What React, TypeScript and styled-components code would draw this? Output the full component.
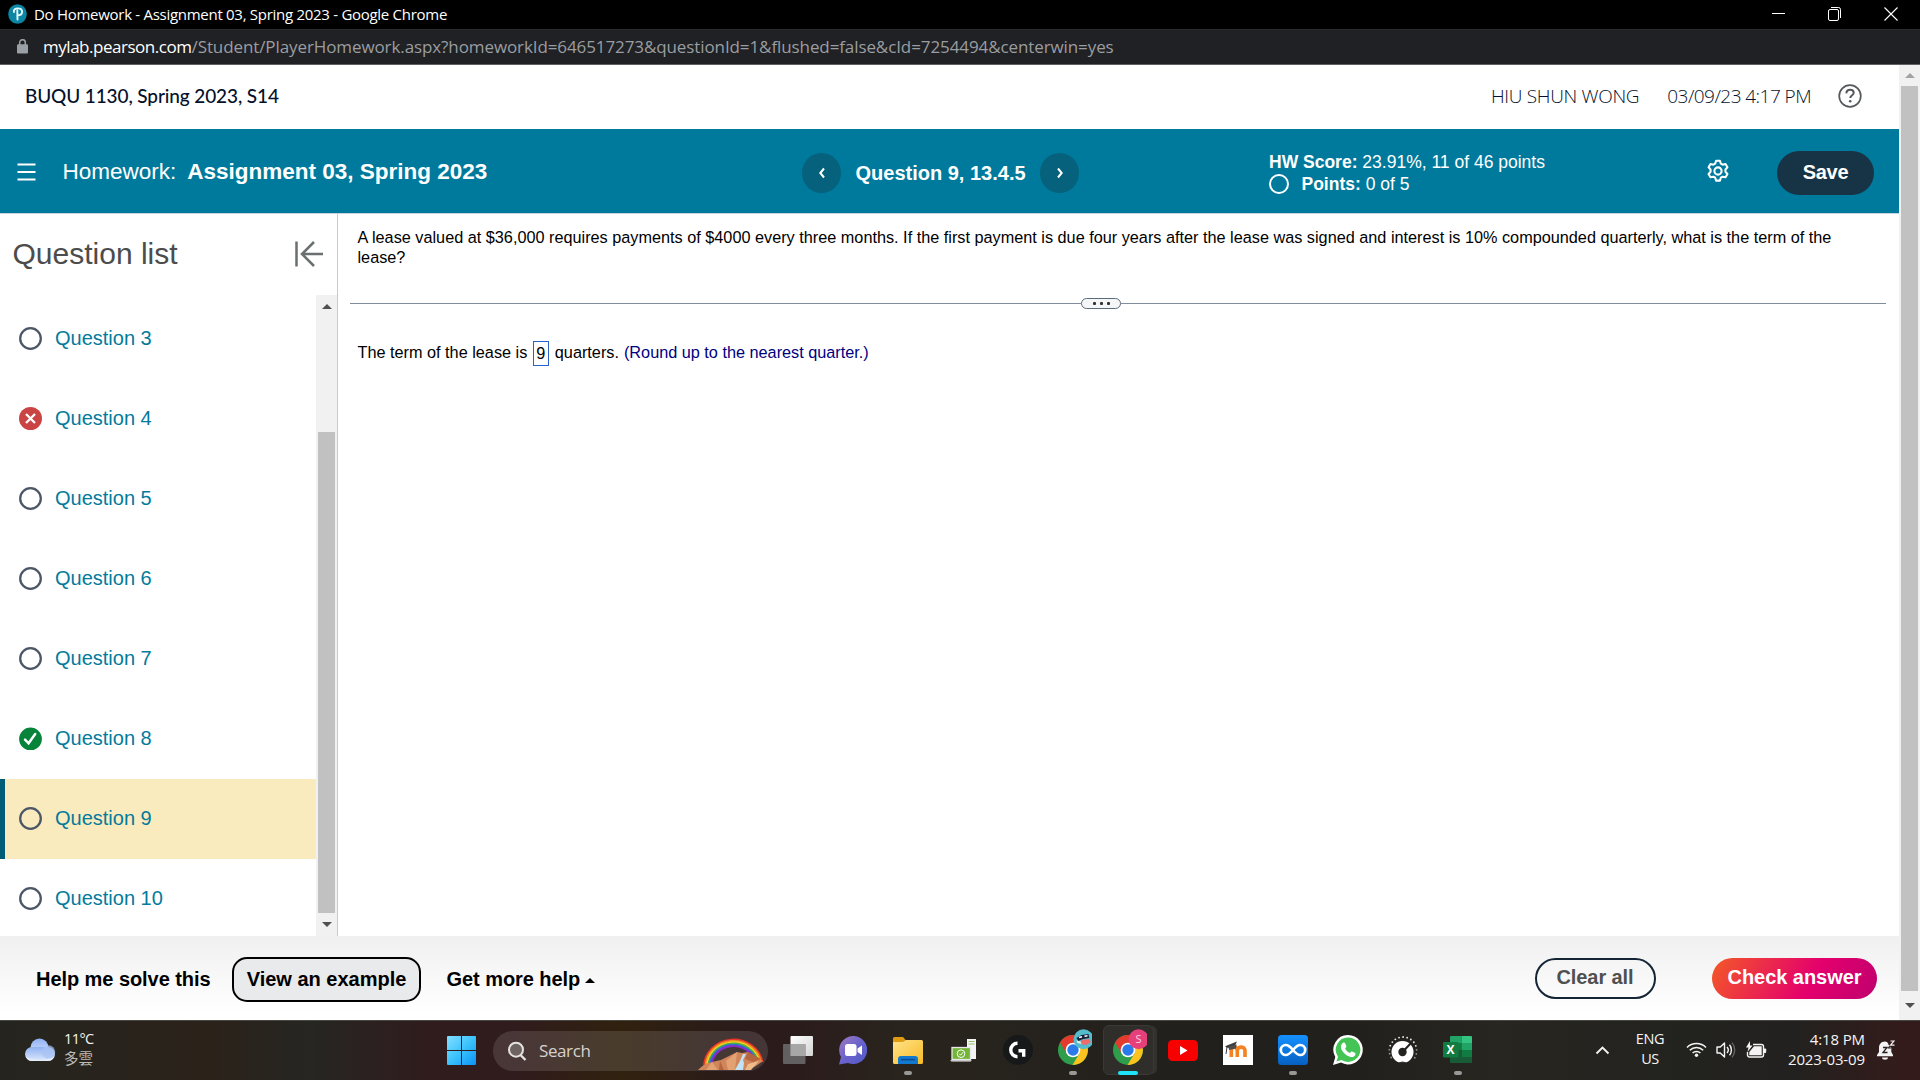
import React from "react";
import styled, { createGlobalStyle } from "styled-components";

const arial = '"Liberation Sans", Arial, sans-serif';
const system = '"Open Sans", "Noto Sans CJK TC", sans-serif';

const GlobalStyle = createGlobalStyle`
  * { box-sizing: border-box; }
  html, body { margin: 0; padding: 0; background: #fff; }
  body { font-family: ${arial}; overflow: hidden; }
  svg { display: block; flex: none; }
`;

const Screen = styled.div`
  width: 1920px;
  height: 1080px;
  display: flex;
  flex-direction: column;
  overflow: hidden;
`;

/* Browser window */

const TitleBar = styled.div`
  height: 29px;
  flex: none;
  background: #000;
  color: #fff;
  font: 15px/26px ${system};
  letter-spacing: -0.283px;
  display: flex;
  align-items: center;
  padding: 0 22px 1px 8px;
  gap: 7px;
`;

const WindowTitle = styled.span`
  flex: 1;
  white-space: nowrap;
`;

const WindowControls = styled.div`
  display: flex;
  align-items: center;
  gap: 43px;
`;

const AddressBar = styled.div`
  height: 36px;
  flex: none;
  background: #202124;
  border-top: 1px solid #2a2b2e;
  border-bottom: 1px solid #5f6164;
  display: flex;
  align-items: center;
  padding: 0 0 1px 17px;
  gap: 15px;
  font: 17px/34px ${system};
  white-space: nowrap;
`;

const Host = styled.span`
  color: #fff;
  letter-spacing: -0.472px;
`;

const UrlPath = styled.span`
  color: #9a9da1;
  letter-spacing: -0.098px;
  margin-left: -15px;
`;

const Viewport = styled.div`
  height: 955px;
  flex: none;
  display: flex;
`;

const Page = styled.div`
  width: 1899px;
  display: flex;
  flex-direction: column;
`;

const ScrollTrack = styled.div`
  width: 21px;
  flex: none;
  background: #f1f1f1;
  display: flex;
  flex-direction: column;
  align-items: center;
`;

const ScrollThumb = styled.div<{ $before: number; $size: number }>`
  width: 17px;
  height: ${(p) => p.$size}px;
  margin-top: ${(p) => p.$before}px;
  background: #c1c1c1;
`;

const ScrollArrow = styled.div<{ $down?: boolean; $dim?: boolean; $h: number }>`
  height: ${(p) => p.$h}px;
  display: flex;
  align-items: center;
  &::before {
    content: "";
    border: 5px solid transparent;
    border-width: ${(p) => (p.$down ? "5px 5px 0" : "0 5px 5px")};
    border-${(p) => (p.$down ? "top" : "bottom")}-color: ${(p) => (p.$dim ? "#a3a3a3" : "#505050")};
  }
`;

/* Course header */

const CourseBar = styled.header`
  height: 64px;
  flex: none;
  background: #fff;
  color: #05112a;
  display: flex;
  align-items: center;
  padding: 0 37px 2px 25px;
`;

const CourseName = styled.span`
  flex: 1;
  font: 500 19px/28px Lato, sans-serif;
  letter-spacing: -0.118px;
`;

const UserName = styled.span`
  font: 300 19px/28px ${system};
  letter-spacing: -0.3px;
  margin-right: 28px;
`;

const Stamp = styled.span`
  font: 300 19px/28px ${system};
  letter-spacing: -0.55px;
  margin-right: 27px;
`;

const AssignmentBar = styled.div`
  height: 85px;
  flex: none;
  background: #007a9c;
  border-bottom: 1px solid #c7d3dc;
  color: #fff;
  display: grid;
  grid-template-columns: 802px 467px 438px 1fr;
  align-items: center;
  padding-top: 3px;
`;

const AssignmentTitle = styled.div`
  display: flex;
  align-items: center;
  padding: 0 0 1px 17px;
  font-size: 22.5px;
  line-height: 30px;
`;

const TitleLead = styled.span`
  margin: 0 11px 0 26.5px;
`;

const QuestionNav = styled.div`
  display: flex;
  align-items: center;
  gap: 14.5px;
  font-size: 20px;
  font-weight: bold;
`;

const QuestionLabel = styled.span`
  padding-top: 2px;
`;

const NavButton = styled.button`
  width: 39px;
  height: 40px;
  padding: 0;
  border: 0;
  border-radius: 50%;
  background: #06617c;
  display: flex;
  align-items: center;
  justify-content: center;
`;

const Score = styled.div`
  font-size: 17.5px;
  line-height: 22px;
  white-space: nowrap;
`;

const PointsLine = styled.div`
  display: flex;
  gap: 12.5px;
  align-items: center;
`;

const PointsRing = styled.i`
  width: 20px;
  height: 20px;
  margin-top: 1px;
  border: 2px solid #fff;
  border-radius: 50%;
`;

const BarActions = styled.div`
  display: flex;
  align-items: center;
  gap: 48px;
  svg { margin-bottom: 3px; }
`;

const SaveButton = styled.button`
  width: 97px;
  height: 44px;
  border: 0;
  padding: 0 0 1px;
  border-radius: 22px;
  background: #173446;
  color: #fff;
  font: bold 20px ${arial};
  letter-spacing: -0.25px;
`;

/* Body */

const Body = styled.div`
  height: 722px;
  flex: none;
  display: flex;
`;

const Sidebar = styled.aside`
  width: 338px;
  flex: none;
  border-right: 1px solid #c7c9d3;
  display: flex;
  flex-direction: column;
`;

const SidebarHead = styled.div`
  height: 81px;
  flex: none;
  display: flex;
  align-items: flex-start;
  justify-content: space-between;
  padding: 21px 14px 0 12.5px;
`;

const SidebarTitle = styled.h2`
  margin: 0;
  font: 30px/38px ${arial};
  color: #4c4c4c;
`;

const ListArea = styled.div`
  flex: 1;
  min-height: 0;
  display: flex;
`;

const QuestionItems = styled.ul`
  list-style: none;
  margin: 0;
  padding: 4px 0 0;
  width: 316px;
  overflow: hidden;
`;

const QuestionItem = styled.li<{ $current?: boolean }>`
  height: 80px;
  display: flex;
  align-items: center;
  gap: 13px;
  padding: 0 0 2px ${(p) => (p.$current ? 14 : 19)}px;
  border-left: ${(p) => (p.$current ? "5px solid #005d76" : "0")};
  background: ${(p) => (p.$current ? "#f9ebbd" : "transparent")};
  color: #047a9c;
  font-size: 20px;
  line-height: 24px;
`;

const Problem = styled.main`
  flex: 1;
  min-width: 0;
  padding: 13px 13px 0 12px;
  color: #000;
  font-size: 16.25px;
  line-height: 20px;
`;

const Prompt = styled.p`
  margin: 0;
  height: 70px;
  padding: 0 40px 0 7.5px;
`;

const Divider = styled.div`
  height: 12px;
  display: flex;
  align-items: center;
  &::before, &::after {
    content: "";
    height: 1px;
    background: #808c9a;
    flex: none;
  }
  &::before { width: 731px; }
  &::after { flex: 1; }
`;

const DividerHandle = styled.div`
  width: 40px;
  height: 11px;
  border: 1px solid #5b6b7c;
  border-radius: 6px;
  background: #f4f6f8;
  display: flex;
  align-items: center;
  justify-content: center;
  gap: 4px;
`;

const HandleDot = styled.i`
  width: 3px;
  height: 3px;
  border-radius: 1px;
  background: #333;
`;

const Answer = styled.div`
  display: flex;
  align-items: center;
  margin-top: 32px;
  padding-left: 7.5px;
  white-space: pre;
  line-height: 19px;
`;

const AnswerText = styled.span`
  padding-bottom: 2px;
`;

const AnswerBox = styled.span`
  width: 16px;
  height: 25px;
  padding-bottom: 1px;
  margin: 0 6px 0 5.5px;
  border: 1px solid #2a62c8;
  display: flex;
  align-items: center;
  justify-content: center;
`;

const Hint = styled(AnswerText)`
  color: #00007f;
  margin-left: 5px;
`;

/* Footer actions */

const Footer = styled.footer`
  height: 84px;
  flex: none;
  background: linear-gradient(#f0f0f0, #fff 92%);
  display: flex;
  align-items: center;
  padding: 0 22px 0 36px;
  font-size: 20px;
  font-weight: bold;
  color: #000;
`;

const TextAction = styled.span`
  padding-top: 2px;
  letter-spacing: -0.06px;
  white-space: nowrap;
`;

const ExampleButton = styled.button`
  width: 189px;
  height: 45px;
  margin: 3px 25.5px 0 21.5px;
  padding: 0 0 1px;
  border: 2px solid #000;
  border-radius: 15px;
  background: #e9eaec;
  color: #000;
  font: bold 20px ${arial};
`;

const CaretUp = styled.i`
  border: 5px solid transparent;
  border-width: 0 5px 5px;
  border-bottom-color: #000;
  margin: 4px auto 0 5px;
`;

const ClearButton = styled.button`
  width: 121px;
  height: 41px;
  margin-right: 56px;
  padding: 0 1px 1px 0;
  border: 2px solid #152535;
  border-radius: 21px;
  background: transparent;
  color: #505050;
  font: bold 20px ${arial};
  letter-spacing: -0.1px;
`;

const CheckButton = styled.button`
  width: 165px;
  height: 41px;
  padding: 0 0 2px;
  border: 0;
  border-radius: 21px;
  background: linear-gradient(118deg, #f2512d 5%, #e4006d 60%, #be006e);
  color: #fff;
  font: bold 20px ${arial};
  letter-spacing: -0.043px;
`;

/* Taskbar */

const Taskbar = styled.div`
  height: 60px;
  flex: none;
  border-top: 1px solid #484641;
  background: linear-gradient(90deg, #25251f 0, #2b221a 210px, #262622 310px, #301c1d 430px, #301c1c 520px, #30210f 620px, #2b1b1b 740px, #2b1c1c 800px, #29241d 900px, #22201d 1180px, #22201d 1350px, #272620 1500px, #22221f 1700px, #23211f 1800px, #331b1b 1900px);
  display: grid;
  grid-template-columns: 447px 323px 715px 1fr;
  color: #f4f4f4;
  font: 15px/20px ${system};
`;

const Weather = styled.div`
  display: flex;
  align-items: center;
  gap: 8px;
  padding-left: 25px;
  svg { margin-bottom: 2px; }
`;

const WeatherText = styled.div`
  font-size: 14.5px;
  letter-spacing: -0.6px;
  line-height: 20px;
  padding-bottom: 4px;
`;

const WeatherNote = styled.div`
  color: #bdbab6;
  letter-spacing: 0;
`;

const StartArea = styled.div`
  display: flex;
  align-items: center;
  gap: 17px;
`;

const SearchBox = styled.div`
  width: 275px;
  height: 40px;
  border-radius: 20px;
  background: rgba(255, 255, 255, 0.12);
  display: flex;
  align-items: center;
  padding-left: 14px;
  gap: 12px;
  overflow: hidden;
  color: #d6d2cf;
  font-size: 17px;
  letter-spacing: -0.4px;
`;

const SearchArt = styled.span`
  margin: 0 4px 0 auto;
  align-self: flex-end;
`;

const Apps = styled.div`
  display: flex;
`;

const AppSlot = styled.div<{ $active?: boolean }>`
  width: 55px;
  flex: none;
  display: grid;
  grid-template-rows: 58px;
  justify-items: center;
  align-items: center;
  position: relative;
  &::before {
    content: "";
    display: ${(p) => (p.$active ? "block" : "none")};
    position: absolute;
    inset: 4px 1px 5px 3px;
    border: 1px solid #3b3936;
    border-radius: 6px;
    background: #302e2b;
    box-shadow: 4px 0 0 -1px #33312e;
  }
  svg { position: relative; }
`;

const RunMark = styled.i<{ $active?: boolean }>`
  position: absolute;
  bottom: 5px;
  width: ${(p) => (p.$active ? 20 : 8)}px;
  height: 4px;
  border-radius: 2px;
  background: ${(p) => (p.$active ? "#1ee3f8" : "#9a9896")};
`;

const Tray = styled.div`
  display: flex;
  align-items: center;
  padding: 0 25px 2px 110px;
`;

const Language = styled.div`
  width: 34px;
  margin: 0 19px 0 23px;
  padding-bottom: 1px;
  text-align: center;
  font-size: 14.5px;
  letter-spacing: -0.4px;
`;

const StatusIcons = styled.div`
  display: flex;
  align-items: center;
  gap: 9px;
`;

const Clock = styled.div`
  margin: 0 12px 0 auto;
  padding-bottom: 2px;
  text-align: right;
  letter-spacing: -0.12px;
`;

/* Icons */

const PearsonIcon = () => (
  <svg width="19" height="20" viewBox="0 0 19 20">
    <ellipse cx="9.5" cy="10" rx="9.3" ry="9.8" fill="#0b87a5" />
    <path d="M6 8c-.8-2 1-3.600 3.600-3.600 2.700 0 4.500 1.300 4.500 3.400 0 2.300-2.100 3.600-4.600 3.600M9.300 6.500l.2 9" fill="none" stroke="#e8fbff" strokeWidth="1.900" strokeLinecap="round" />
  </svg>
);

const LockIcon = () => (
  <svg width="11" height="15" viewBox="0 0 11 15">
    <rect x="0" y="5.200" width="11" height="9.300" rx="1.200" fill="#9aa0a6" />
    <path d="M2.700 6V3.500a2.800 2.800 0 0 1 5.600 0V6" fill="none" stroke="#9aa0a6" strokeWidth="1.500" />
  </svg>
);

const StatusIcon = ({ status }: { status: "open" | "wrong" | "right" }) => (
  <svg width="23" height="23" viewBox="0 0 23 23">
    {status === "open" && <circle cx="11.500" cy="11.500" r="10.300" fill="none" stroke="#4b5666" strokeWidth="2.300" />}
    {status === "wrong" && (
      <>
        <circle cx="11.500" cy="11.500" r="11.500" fill="#ca4444" />
        <path d="M7 7l9 9M16 7l-9 9" stroke="#fff" strokeWidth="2.300" />
      </>
    )}
    {status === "right" && (
      <>
        <circle cx="11.500" cy="12" r="11.400" fill="#07833a" />
        <path d="M6 12.600l3.600 3.700 6.600-9.200" fill="none" stroke="#fff" strokeWidth="2.500" strokeLinecap="round" />
      </>
    )}
  </svg>
);

const GearIcon = () => (
  <svg width="22" height="24" viewBox="0 0 22 24" fill="none" stroke="#fff" strokeWidth="2.100" strokeLinejoin="round">
    <path d="M9 1.500h4l.9 3 1.900 1.100 3-.8 2 3.500-2.100 2.200v2.400l2.100 2.300-2 3.500-3-.7-1.900 1.100-.9 3h-4l-.9-3-1.900-1.100-3 .7-2-3.500 2.100-2.300v-2.400L1.200 8.300l2-3.500 3 .8 1.900-1.100z" transform="translate(0.400 .3) scale(.965)" />
    <circle cx="11" cy="12" r="3.600" />
  </svg>
);

const CloudIcon = () => (
  <svg width="31" height="23" viewBox="0 0 31 23">
    <defs>
      <linearGradient id="cloud" x1="0" y1="0" x2="0" y2="1">
        <stop offset="0" stopColor="#8fb1f2" />
        <stop offset="1" stopColor="#dde8fb" />
      </linearGradient>
    </defs>
    <circle cx="14.500" cy="9.500" r="9" fill="url(#cloud)" />
    <rect x="0" y="9" width="30" height="14" rx="7" fill="url(#cloud)" />
    <circle cx="23.500" cy="14" r="6.700" fill="#a9c3f3" opacity=".7" />
    <path d="M1 18c2 5 26 5 28 0-1 4-3 5-7 5H8c-4 0-6-1-7-5z" fill="#e3ecfb" />
  </svg>
);

const StartIcon = () => (
  <svg width="29" height="29" viewBox="0 0 29 29">
    <defs>
      <linearGradient id="start" x1="0" y1="0" x2="29" y2="29" gradientUnits="userSpaceOnUse">
        <stop offset="0" stopColor="#83dfff" />
        <stop offset=".5" stopColor="#3cc3fc" />
        <stop offset="1" stopColor="#0a92f5" />
      </linearGradient>
    </defs>
    <path d="M0 1a1 1 0 0 1 1-1h13v14H0zM15 0h13a1 1 0 0 1 1 1v13H15zM0 15h14v14H1a1 1 0 0 1-1-1zM15 15h14v13a1 1 0 0 1-1 1H15z" fill="url(#start)" />
  </svg>
);

const RainbowIcon = () => (
  <svg width="66" height="34" viewBox="0 0 66 34">
    {["#e8342a", "#f58a1f", "#f6d12a", "#4cae3f", "#2f6fd8", "#8a2bc9"].map((c, i) => (
      <path key={c} d={`M${6 + i * 1.5} 30A${29.5 - i * 1.5} ${27.5 - i * 1.5} 0 0 1 ${64.5 - i * 1.5} 25`} fill="none" stroke={c} strokeWidth="1.900" />
    ))}
    <path d="M0 33c5-5 9-7 14-8l9-2 8-4 8-4 5 1 6-1 12 8 3 1-7 5-8 4z" fill="#d0855a" />
    <path d="M14 25l-6 8h12zM39 15l-11 9 2 9h7z" fill="#e3a273" />
    <path d="M50 15l-3 7 8 3 8-3zM22 24l-1 9h5z" fill="#b5653f" />
    <path d="M45 17l-3 7-5 9h8l1-7-1-3 3-6z" fill="#bfe3f7" />
    <path d="M50 27l11-3-8 9h-6z" fill="#efbb8a" />
  </svg>
);

const TaskViewIcon = () => (
  <svg width="30" height="28" viewBox="0 0 30 28">
    <defs>
      <linearGradient id="tv" x1="0" y1="0" x2="1" y2="1">
        <stop offset="0" stopColor="#fff" />
        <stop offset="1" stopColor="#d3d3d3" />
      </linearGradient>
    </defs>
    <rect x="7.500" y="0" width="22.500" height="20" rx="1" fill="url(#tv)" />
    <rect x="0" y="8" width="22.500" height="20" rx="1" fill="#6b6b6b" fillOpacity=".86" />
    <path d="M7.500 8h15v12h-15z" fill="#a7a7a7" />
  </svg>
);

const ChatIcon = () => (
  <svg width="28" height="29" viewBox="0 0 28 29">
    <defs>
      <linearGradient id="chat" x1="0" y1="0" x2="1" y2="1">
        <stop offset="0" stopColor="#a07cc0" />
        <stop offset=".5" stopColor="#6a62cc" />
        <stop offset="1" stopColor="#5059c9" />
      </linearGradient>
    </defs>
    <path d="M14 0a14 14 0 1 1-5 27L0 28.500 2 21A14 14 0 0 1 14 0z" fill="url(#chat)" />
    <rect x="6" y="8" width="11.500" height="12" rx="2.500" fill="#fff" />
    <path d="M18.500 12.500l4.500-3v9.500l-4.500-3z" fill="#fff" />
  </svg>
);

const FolderIcon = () => (
  <svg width="30" height="27" viewBox="0 0 30 27">
    <defs>
      <linearGradient id="fold" x1="0" y1="0" x2="1" y2="1">
        <stop offset="0" stopColor="#ffe38a" />
        <stop offset="1" stopColor="#f9bb26" />
      </linearGradient>
    </defs>
    <path d="M0 1.500A1.500 1.500 0 0 1 1.500 0H10l3 3.500V8H0z" fill="#e09b12" />
    <path d="M0 5h10l3-2h15.500A1.500 1.500 0 0 1 30 4.500v21a1.500 1.500 0 0 1-1.500 1.500h-27A1.500 1.500 0 0 1 0 25.500z" fill="url(#fold)" />
    <path d="M5 27v-5a3 3 0 0 1 3-3h14a3 3 0 0 1 3 3v5z" fill="#1379cf" />
    <path d="M8 22.600h14" stroke="#0a4c91" strokeWidth="1.500" />
  </svg>
);

const PcHealthIcon = () => (
  <svg width="26" height="23" viewBox="0 0 26 23">
    <path d="M17 0h9v20h-9z" fill="#f4f4f4" />
    <path d="M18.500 2.500h6M18.500 5h6" stroke="#91c36b" strokeWidth="1" />
    <rect x="2" y="8.500" width="18.500" height="12" fill="#73b536" stroke="#e8e8e8" strokeWidth="1.300" />
    <path d="M0 21.300h22l-1.500 1.200h-19z" fill="#f4f4f4" />
    <circle cx="11" cy="14.700" r="3.800" fill="none" stroke="#fff" />
    <path d="M9.300 14.800l1.400 1.400 2.400-3" fill="none" stroke="#fff" />
  </svg>
);

const LogitechIcon = () => (
  <svg width="30" height="30" viewBox="0 0 30 30">
    <circle cx="15" cy="15" r="15" fill="#16181a" />
    <path d="M14.500 8.200a6.700 6.700 0 1 0 0 13.500M15.500 15.800h5.200v6" fill="none" stroke="#fff" strokeWidth="3.400" />
  </svg>
);

const ChromeBase = () => (
  <>
    <circle cx="16" cy="22" r="15" fill="#2f9e4c" />
    <path d="M3 14.500A15 15 0 0 1 29.100 14.700L16 15z" fill="#e33b2e" />
    <path d="M3 14.500L9.600 25.500 16 22V14.500H29L16 7z" fill="#e33b2e" />
    <path d="M16 15h13.200A15 15 0 0 1 15.500 37l7-11.500z" fill="#fcc31e" />
    <circle cx="16" cy="22" r="7.300" fill="#fff" />
    <circle cx="16" cy="22" r="5.700" fill="#2a7bea" />
  </>
);

const ChromeMeIcon = () => (
  <svg width="38" height="44" viewBox="-3 0 38 44">
    <ChromeBase />
    <circle cx="26.500" cy="11.300" r="10" fill="#55bccb" />
    <path d="M19.500 10l5-3 7-1 .8 4-6 1-5 2z" fill="#17203a" />
    <path d="M22 9.500l3-.800M27.500 8.300l3-.500" stroke="#fff" strokeWidth="1.600" />
    <path d="M24 12l8-1 2 3-5 3-5-1z" fill="#ef6c6a" />
    <path d="M19.500 12.500l4 1 1 2.500-4-1z" fill="#e7efe9" />
  </svg>
);

const BadgeLetter = styled.text`
  font: 11px ${system};
  fill: #ffd3e2;
  text-anchor: middle;
`;

const ChromeWorkIcon = () => (
  <svg width="38" height="44" viewBox="-3 0 38 44">
    <ChromeBase />
    <circle cx="26.500" cy="11.300" r="10" fill="#e6407b" />
    <BadgeLetter x="26.500" y="15.300">S</BadgeLetter>
  </svg>
);

const YoutubeIcon = () => (
  <svg width="30" height="21" viewBox="0 0 30 21">
    <rect width="30" height="21" rx="4.500" fill="#f80000" />
    <path d="M12 6l7.500 4.500L12 15z" fill="#fff" />
  </svg>
);

const MoodleIcon = () => (
  <svg width="30" height="30" viewBox="0 0 30 30">
    <rect width="30" height="30" fill="#fff" />
    <path d="M8.300 22v-6.500c0-4.500 6-4.500 6 0V22v-6.500c0-4.500 7.700-4.500 7.700 0V22" fill="none" stroke="#f48221" strokeWidth="3.600" />
    <path d="M2 11.200L14 6.500l-3 6.500-7-.2z" fill="#3c3c3c" />
    <path d="M4 12l-1 7" stroke="#3c3c3c" strokeWidth="1" />
    <path d="M5.500 11.500l8-2-.5 4-7 1.500z" fill="#4d4d4d" />
  </svg>
);

const InfinityIcon = () => (
  <svg width="30" height="30" viewBox="0 0 30 30">
    <defs>
      <linearGradient id="inf" x1="0" y1="0" x2="0" y2="1">
        <stop offset="0" stopColor="#1491ff" />
        <stop offset="1" stopColor="#0760c2" />
      </linearGradient>
    </defs>
    <rect width="30" height="30" rx="3.500" fill="url(#inf)" />
    <path d="M15 15c-3-3.600-4.800-5-7.200-5a5 5 0 0 0 0 10c2.400 0 4.200-1.400 7.200-5s4.800-5 7.200-5a5 5 0 0 1 0 10c-2.400 0-4.200-1.400-7.200-5z" fill="none" stroke="#fff" strokeWidth="2.700" />
  </svg>
);

const WhatsappIcon = () => (
  <svg width="30" height="30" viewBox="0 0 30 30">
    <path d="M15.200 0A14.700 14.700 0 1 1 8 27.600L0 30l2.300-8A14.700 14.700 0 0 1 15.200 0z" fill="#fff" />
    <path d="M15.200 2.500a12.200 12.200 0 1 1-6.600 22.500L3.500 26.500 5 21.700A12.200 12.200 0 0 1 15.200 2.500z" fill="#43c455" />
    <path d="M10 7.800c.8-.5 1.500-.4 2 .3l1.300 3c.2.800-.3 1.300-1.200 2.300 1 2 2.600 3.500 5 4.600.9-.8 1.200-1.800 2-1.600l3.200 1.600c.6.500 0 2.700-1.400 3.500-2 1-4.300.5-7.300-1.300-3-2-5.500-5.200-5.700-7.600-.1-2 .9-4 2.100-4.800z" fill="#fff" />
  </svg>
);

const DialIcon = () => (
  <svg width="30" height="28" viewBox="0 0 30 28">
    {Array.from({ length: 15 }, (_, i) => {
      const a = ((150 + i * 17.2) * Math.PI) / 180;
      return <circle key={i} cx={15 + 13.7 * Math.cos(a)} cy={14.7 + 13.7 * Math.sin(a)} r=".95" fill={i > 2 && i < 12 ? "#e6e6e6" : "#8f8f8f"} />;
    })}
    <circle cx="14.500" cy="16" r="11" fill="#fff" />
    <circle cx="14.500" cy="16" r="4.200" fill="#24211f" />
    <path d="M15 15.500l8-8.500" stroke="#24211f" strokeWidth="2" />
    <path d="M8 28q6.500-5 13 0z" fill="#24211f" opacity=".9" />
  </svg>
);

const ExcelLetter = styled.text`
  font: bold 12px ${system};
  fill: #fff;
  text-anchor: middle;
`;

const ExcelIcon = () => (
  <svg width="30" height="28" viewBox="0 0 30 28">
    <path d="M7 1a1 1 0 0 1 1-1h10.500v7H7z" fill="#21a366" />
    <path d="M18.500 0H28a1 1 0 0 1 1 1v6H18.500z" fill="#33c481" />
    <path d="M7 7h11.500v7H7z" fill="#107c41" />
    <path d="M18.500 7H29v7H18.500z" fill="#21a366" />
    <path d="M7 14h11.500v7H7z" fill="#185c37" />
    <path d="M18.500 14H29v7H18.500z" fill="#107c41" />
    <path d="M7 21h22v5a1 1 0 0 1-1 1H8a1 1 0 0 1-1-1z" fill="#185c37" />
    <rect x="0" y="6" width="15.500" height="15.500" rx="1.200" fill="#107c41" />
    <ExcelLetter x="7.600" y="18.300">X</ExcelLetter>
  </svg>
);

const WifiIcon = () => (
  <svg width="21" height="17" viewBox="0 0 21 17" fill="none" stroke="#f4f4f4" strokeWidth="1.500">
    <path d="M1 6.500a13.300 13.300 0 0 1 19 0M3.800 9.300a9.400 9.400 0 0 1 13.400 0M6.600 12a5.500 5.500 0 0 1 7.800 0" />
    <circle cx="10.500" cy="14.200" r="1.700" fill="#f4f4f4" stroke="none" />
  </svg>
);

const SpeakerIcon = () => (
  <svg width="21" height="18" viewBox="0 0 21 18" fill="none" stroke="#f4f4f4" strokeWidth="1.400">
    <path d="M1 6h3.300L8.500 2v14l-4.200-4H1z" strokeLinejoin="round" />
    <path d="M11 6a4.500 4.500 0 0 1 0 6M13.500 3.800a8 8 0 0 1 0 10.400" />
    <path d="M16 1.600a11.500 11.500 0 0 1 0 14.800" stroke="#66625f" />
  </svg>
);

const BatteryIcon = () => (
  <svg width="21" height="18" viewBox="0 0 21 18">
    <path d="M7 3.500h8.500a2 2 0 0 1 2 2v8.500a2 2 0 0 1-2 2h-12a2 2 0 0 1-2-2V11" fill="none" stroke="#f4f4f4" strokeWidth="1.400" />
    <path d="M8 5.300h7.700v9H3.300V11z" fill="#f4f4f4" />
    <path d="M18 7.500h1.200a1 1 0 0 1 1 1v2.500a1 1 0 0 1-1 1H18z" fill="#f4f4f4" />
    <path d="M4 0L0 6.500h2.500L1.500 11l5-6.500H4z" fill="#f4f4f4" />
  </svg>
);

const BellIcon = () => (
  <svg width="18" height="20" viewBox="0 0 18 20">
    <path d="M8 1.500c-4 0-6 3-6 6V12L0 15v1.300h16V15l-1.700-3V8L10 2z" fill="#f4f4f4" />
    <path d="M5 17.500h6c0 3-6 3-6 0z" fill="#f4f4f4" />
    <path d="M6 7.500h4l-4 5h4.500" fill="none" stroke="#28211f" strokeWidth="1.300" />
    <path d="M11.500 4.500h2.500l-2.500 3.500h2.700" fill="none" stroke="#28211f" strokeWidth="1.200" />
    <path d="M13.500 1h3.500l-3.500 4.200h4" fill="none" stroke="#f4f4f4" strokeWidth="1.200" />
  </svg>
);

type Status = "open" | "wrong" | "right";
const questions: { n: number; status: Status; current?: boolean }[] = [
  { n: 3, status: "open" },
  { n: 4, status: "wrong" },
  { n: 5, status: "open" },
  { n: 6, status: "open" },
  { n: 7, status: "open" },
  { n: 8, status: "right" },
  { n: 9, status: "open", current: true },
  { n: 10, status: "open" },
];

const apps: { Icon: () => React.ReactElement; running?: boolean; active?: boolean }[] = [
  { Icon: TaskViewIcon },
  { Icon: ChatIcon },
  { Icon: FolderIcon, running: true },
  { Icon: PcHealthIcon },
  { Icon: LogitechIcon },
  { Icon: ChromeMeIcon, running: true },
  { Icon: ChromeWorkIcon, running: true, active: true },
  { Icon: YoutubeIcon },
  { Icon: MoodleIcon },
  { Icon: InfinityIcon, running: true },
  { Icon: WhatsappIcon },
  { Icon: DialIcon },
  { Icon: ExcelIcon, running: true },
];

export default function App() {
  return (
    <Screen>
      <GlobalStyle />
      <TitleBar>
        <PearsonIcon />
        <WindowTitle>Do Homework - Assignment 03, Spring 2023 - Google Chrome</WindowTitle>
        <WindowControls>
          <svg width="13" height="14" viewBox="0 0 13 14"><path d="M0 6.500h13" stroke="#fff" /></svg>
          <svg width="13" height="14" viewBox="0 0 13 14" fill="none" stroke="#fff">
            <rect x=".5" y="2.500" width="10" height="11" rx="1.500" />
            <path d="M3 .5h7.500a2 2 0 0 1 2 2V11" />
          </svg>
          <svg width="14" height="14" viewBox="0 0 14 14"><path d="M.5.500l13 13M13.500.500l-13 13" stroke="#fff" strokeWidth="1.100" /></svg>
        </WindowControls>
      </TitleBar>
      <AddressBar>
        <LockIcon />
        <Host>mylab.pearson.com</Host>
        <UrlPath>/Student/PlayerHomework.aspx?homeworkId=646517273&amp;questionId=1&amp;flushed=false&amp;cId=7254494&amp;centerwin=yes</UrlPath>
      </AddressBar>

      <Viewport>
        <Page>
          <CourseBar>
            <CourseName>BUQU 1130, Spring 2023, S14</CourseName>
            <UserName>HIU SHUN WONG</UserName>
            <Stamp>03/09/23 4:17 PM</Stamp>
            <svg width="24" height="24" viewBox="0 0 24 24" fill="none" stroke="#55595c" strokeWidth="1.700">
              <circle cx="12" cy="12" r="10.800" />
              <path d="M8.300 9.300c.2-2.300 1.700-3.500 3.800-3.500 2 0 3.600 1.200 3.600 3 0 2.700-3.500 2.700-3.500 5.200" strokeWidth="2" />
              <circle cx="12.200" cy="17.300" r="1.300" fill="#55595c" stroke="none" />
            </svg>
          </CourseBar>

          <AssignmentBar>
            <AssignmentTitle>
              <svg width="19" height="18" viewBox="0 0 19 18"><path d="M.5 1.500h18M.5 9h18M.5 16.500h18" stroke="#fff" strokeWidth="2" /></svg>
              <TitleLead>Homework:</TitleLead>
              <strong>Assignment 03, Spring 2023</strong>
            </AssignmentTitle>
            <QuestionNav>
              <NavButton>
                <svg width="8" height="12" viewBox="0 0 8 12"><path d="M6 1.500L2.300 6 6 10.500" fill="none" stroke="#fff" strokeWidth="2" /></svg>
              </NavButton>
              <QuestionLabel>Question 9, 13.4.5</QuestionLabel>
              <NavButton>
                <svg width="8" height="12" viewBox="0 0 8 12"><path d="M2 1.500L5.700 6 2 10.500" fill="none" stroke="#fff" strokeWidth="2" /></svg>
              </NavButton>
            </QuestionNav>
            <Score>
              <div><b>HW Score:</b> 23.91%, 11 of 46 points</div>
              <PointsLine>
                <PointsRing />
                <span><b>Points:</b> 0 of 5</span>
              </PointsLine>
            </Score>
            <BarActions>
              <GearIcon />
              <SaveButton>Save</SaveButton>
            </BarActions>
          </AssignmentBar>

          <Body>
            <Sidebar>
              <SidebarHead>
                <SidebarTitle>Question list</SidebarTitle>
                <svg width="28" height="38" viewBox="0 0 28 38" fill="none" stroke="#6a7070" strokeWidth="2.500">
                  <path d="M1.500 6.500v25M28 19H7.500M19 7l-12 12 12 12" />
                </svg>
              </SidebarHead>
              <ListArea>
                <QuestionItems>
                  {questions.map((q) => (
                    <QuestionItem key={q.n} $current={q.current}>
                      <StatusIcon status={q.status} />
                      Question {q.n}
                    </QuestionItem>
                  ))}
                </QuestionItems>
                <ScrollTrack>
                  <ScrollArrow $h={23} />
                  <ScrollThumb $before={114} $size={481} />
                  <ScrollArrow $h={23} $down />
                </ScrollTrack>
              </ListArea>
            </Sidebar>

            <Problem>
              <Prompt>
                A lease valued at $36,000 requires payments of $4000 every three months. If the first payment is due four years after the lease was signed and interest is 10% compounded quarterly, what is the term of the lease?
              </Prompt>
              <Divider>
                <DividerHandle>
                  <HandleDot />
                  <HandleDot />
                  <HandleDot />
                </DividerHandle>
              </Divider>
              <Answer>
                <AnswerText>The term of the lease is</AnswerText>
                <AnswerBox>9</AnswerBox>
                <AnswerText>quarters.</AnswerText>
                <Hint>(Round up to the nearest quarter.)</Hint>
              </Answer>
            </Problem>
          </Body>

          <Footer>
            <TextAction>Help me solve this</TextAction>
            <ExampleButton>View an example</ExampleButton>
            <TextAction>Get more help</TextAction>
            <CaretUp />
            <ClearButton>Clear all</ClearButton>
            <CheckButton>Check answer</CheckButton>
          </Footer>
        </Page>
        <ScrollTrack>
          <ScrollArrow $h={21} $dim />
          <ScrollThumb $before={0} $size={907} />
          <ScrollArrow $h={29} $down />
        </ScrollTrack>
      </Viewport>

      <Taskbar>
        <Weather>
          <CloudIcon />
          <WeatherText>
            11°C
            <WeatherNote>多雲</WeatherNote>
          </WeatherText>
        </Weather>
        <StartArea>
          <StartIcon />
          <SearchBox>
            <svg width="20" height="20" viewBox="0 0 20 20" fill="none" stroke="#e6e2e0" strokeWidth="2">
              <circle cx="9" cy="8.700" r="7" fill="#6d6361" />
              <path d="M13.500 14l5 5" strokeWidth="2.400" />
            </svg>
            <span>Search</span>
            <SearchArt><RainbowIcon /></SearchArt>
          </SearchBox>
        </StartArea>
        <Apps>
          {apps.map(({ Icon, running, active }, i) => (
            <AppSlot key={i} $active={active}>
              <Icon />
              {running && <RunMark $active={active} />}
            </AppSlot>
          ))}
        </Apps>
        <Tray>
          <svg width="15" height="10" viewBox="0 0 15 10"><path d="M1.500 8.500l6-6 6 6" fill="none" stroke="#f4f4f4" strokeWidth="1.900" /></svg>
          <Language>ENG<br />US</Language>
          <StatusIcons>
            <WifiIcon />
            <SpeakerIcon />
            <BatteryIcon />
          </StatusIcons>
          <Clock>4:18 PM<br />2023-03-09</Clock>
          <BellIcon />
        </Tray>
      </Taskbar>
    </Screen>
  );
}
